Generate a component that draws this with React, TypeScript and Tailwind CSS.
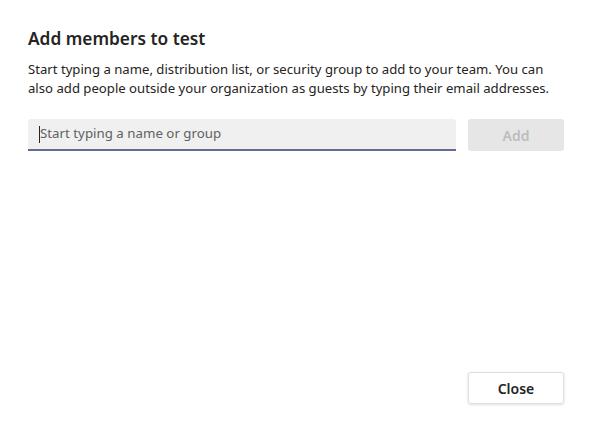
export default function App() {
  return (
    <div
      className="w-[595px] h-[435px] bg-white flex flex-col pl-[28px] pr-[31px] pt-[26px] pb-[31px] text-[#252423]"
      style={{ fontFamily: '"Noto Sans", "Open Sans", sans-serif' }}
    >
      <h1 className="text-[17.3px] font-semibold leading-[26px]">Add members to test</h1>
      <p className="mt-[8px] text-[13.15px] leading-[19px] text-[#252423] w-[540px]">
        Start typing a name, distribution list, or security group to add to your team. You can also add people outside your organization as guests by typing their email addresses.
      </p>
      <div className="mt-[21px] flex gap-[12px]">
        <div className="flex-1 h-[32px] bg-[#f0f0f0] rounded-t-[3px] border-b-2 border-[#636c94] flex items-center px-[11px]">
          <span className="w-px h-[17px] bg-[#252423]" />
          <span className="text-[13.3px] text-[#616161]">Start typing a name or group</span>
        </div>
        <button className="w-[96px] h-[32px] rounded-[3px] bg-[#e6e6e6] text-[#bdbdbd] text-[14px] font-semibold">
          Add
        </button>
      </div>
      <div className="flex-1" />
      <div className="flex justify-end">
        <button className="w-[96px] h-[32px] rounded-[3px] bg-white border border-[#e1dfdd] shadow-[0_1px_3px_rgba(0,0,0,0.12)] text-[14px] font-semibold text-[#252423]">
          Close
        </button>
      </div>
    </div>
  );
}
